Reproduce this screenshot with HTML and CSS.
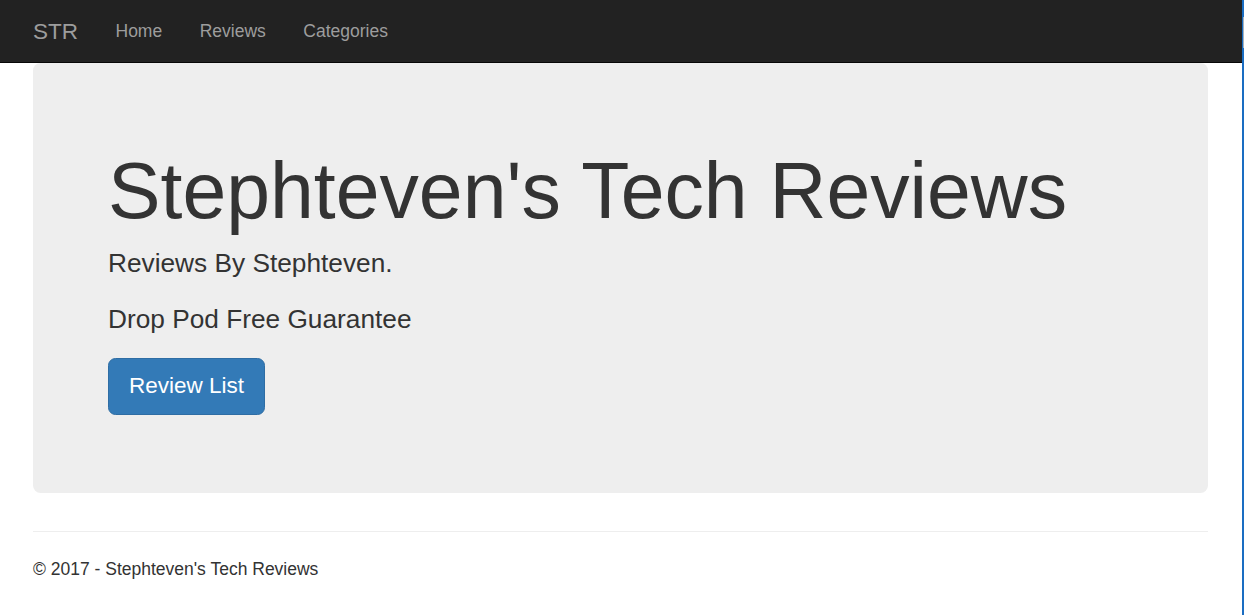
FILE: index.html
```html
<!DOCTYPE html>
<html lang="en">
<head>
<meta charset="utf-8">
<title>Stephteven's Tech Reviews</title>
<link rel="stylesheet" href="styles.css">
</head>
<body>
<div class="frame">
  <div class="page">
    <nav class="navbar">
      <div class="container nav-inner">
        <a class="brand" href="#">STR</a>
        <ul class="nav-links">
          <li><a href="#">Home</a></li>
          <li><a href="#">Reviews</a></li>
          <li><a href="#">Categories</a></li>
        </ul>
      </div>
    </nav>
    <div class="container body-content">
      <div class="jumbotron">
        <h1>Stephteven's Tech Reviews</h1>
        <p class="lead">Reviews By Stephteven.</p>
        <p class="lead">Drop Pod Free Guarantee</p>
        <p class="lead"><a class="btn" href="#">Review List</a></p>
      </div>
      <hr class="rule">
      <footer class="footer">
        <p>© 2017 - Stephteven's Tech Reviews</p>
      </footer>
    </div>
  </div>
  <div class="edge"><div class="edge-thumb"></div></div>
</div>
</body>
</html>
```

FILE: styles.css
```css
* { box-sizing: border-box; }
html, body { margin: 0; padding: 0; }
body {
  font-family: "Liberation Sans", Arial, Helvetica, sans-serif;
  font-size: 17.5px;
  line-height: 1.42857;
  color: #333;
  background: #fff;
}
.frame {
  display: flex;
  height: 615px;
  overflow: hidden;
}
.page {
  width: 1242px;
  flex: none;
}
.edge {
  width: 2px;
  flex: none;
  background: #1a6dc2;
}
.edge-thumb {
  margin-top: 17px;
  margin-left: 1px;
  width: 1px;
  height: 31px;
  background: #a7b3bd;
}
.container {
  width: 1211px;
  margin: 0 0 0 15px;
  padding: 0 18px;
}
.navbar {
  background: #222;
  border-bottom: 1px solid #080808;
  height: 63px;
}
.nav-inner {
  display: flex;
  align-items: center;
  height: 62px;
}
.brand {
  font-size: 22.5px;
  color: #9d9d9d;
  text-decoration: none;
  padding-right: 18.75px;
  line-height: 25px;
}
.nav-links {
  display: flex;
  list-style: none;
  margin: 0;
  padding: 0;
}
.nav-links a {
  display: block;
  padding: 0 18.75px;
  color: #9d9d9d;
  text-decoration: none;
  font-size: 17.5px;
  line-height: 25px;
}
.jumbotron {
  background: #eee;
  border-radius: 7.5px;
  padding: 60px 75px;
  margin-bottom: 37.5px;
}
.jumbotron h1 {
  font-size: 78.75px;
  font-weight: 500;
  line-height: 1.1;
  margin: 25px 0 10.5px;
  color: #333;
}
.lead {
  font-size: 26.25px;
  font-weight: 200;
  line-height: 1.42857;
  margin: 0 0 18.75px;
}
.lead-btn { margin-top: -1px; }
.btn {
  display: inline-block;
  font-size: 22.5px;
  line-height: 1.3333;
  padding: 12.5px 20px;
  border: 1.25px solid #2e6da4;
  border-radius: 7.5px;
  background: #337ab7;
  color: #fff;
  text-decoration: none;
  vertical-align: middle;
}
.rule {
  margin: 0 0 25px;
  border: 0;
  border-top: 1.25px solid #eee;
}
.footer p { margin: 0; }
```
